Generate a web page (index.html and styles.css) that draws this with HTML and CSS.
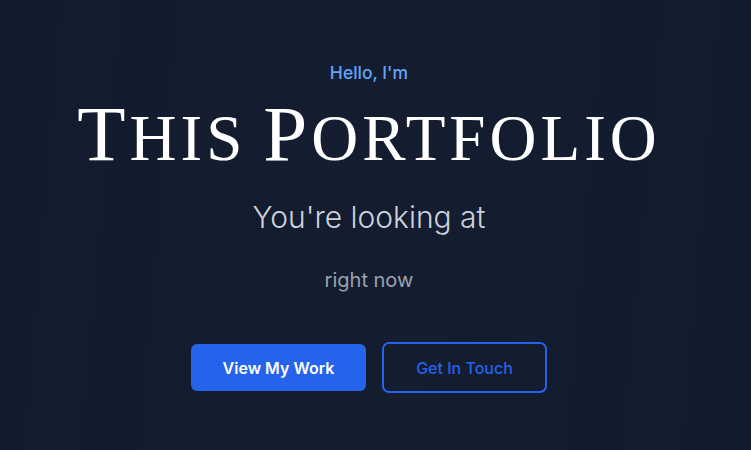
FILE: index.html
```html
<!DOCTYPE html>
<html lang="en">
<head>
<meta charset="utf-8">
<title>Portfolio</title>
<link rel="stylesheet" href="styles.css">
</head>
<body>
<main class="hero">
  <div class="streaks"></div>
  <div class="content">
    <p class="hello">Hello, I'm</p>
    <h1 class="title"><span class="cap">T</span><span class="sc">his</span> <span class="cap">P</span><span class="sc">ortfolio</span></h1>
    <p class="sub">You're looking at</p>
    <p class="tag">right now</p>
    <div class="actions">
      <a class="btn btn-primary" href="#work">View My Work</a>
      <a class="btn btn-outline" href="#contact">Get In Touch</a>
    </div>
  </div>
</main>
</body>
</html>
```
FILE: styles.css
```css
* { box-sizing: border-box; }
html, body { margin: 0; padding: 0; }
body {
  background: #131b2e;
  font-family: Inter, "Noto Sans", sans-serif;
  width: 751px;
  height: 450px;
  overflow: hidden;
}
.hero {
  position: relative;
  height: 450px;
  padding-right: 13px;
  background: linear-gradient(90deg, #121a2d 0%, #141c2f 50%, #121a2d 100%);
}
.streaks {
  position: absolute;
  inset: 0;
  background: repeating-linear-gradient(95deg, rgba(255,255,255,0) 0 60px, rgba(255,255,255,0.004) 60px 120px);
  pointer-events: none;
}
.content {
  position: relative;
  display: flex;
  flex-direction: column;
  align-items: center;
  padding-top: 62px;
}
.hello {
  margin: 0;
  color: #60a5fa;
  font-size: 17.5px;
  font-weight: 500;
  line-height: 22px;
}
.title {
  margin: 10px 0 0;
  color: #ffffff;
  font-family: "Liberation Serif", "DejaVu Serif", serif;
  font-weight: 400;
  line-height: 80px;
  white-space: nowrap;
  letter-spacing: 4px;
  word-spacing: 5px;
}
.cap { font-size: 79px; }
.sc { font-size: 65px; text-transform: uppercase; }
.sub {
  margin: 10px 0 0;
  color: #cbd2dc;
  font-size: 30px;
  font-weight: 300;
  line-height: 36px;
}
.tag {
  margin: 31px 0 0;
  color: #9ca3af;
  font-size: 20px;
  font-weight: 400;
  line-height: 28px;
}
.actions {
  display: flex;
  align-items: center;
  gap: 16px;
  margin-top: 48px;
}
.btn {
  display: flex;
  align-items: center;
  justify-content: center;
  text-decoration: none;
  font-size: 16px;
  border-radius: 6px;
}
.btn-primary {
  width: 175px;
  height: 47px;
  background: #2563eb;
  color: #ffffff;
  font-weight: 600;
}
.btn-outline {
  width: 165px;
  height: 51px;
  border: 2px solid #2563eb;
  color: #2563eb;
  font-weight: 500;
  border-radius: 7px;
}
```
